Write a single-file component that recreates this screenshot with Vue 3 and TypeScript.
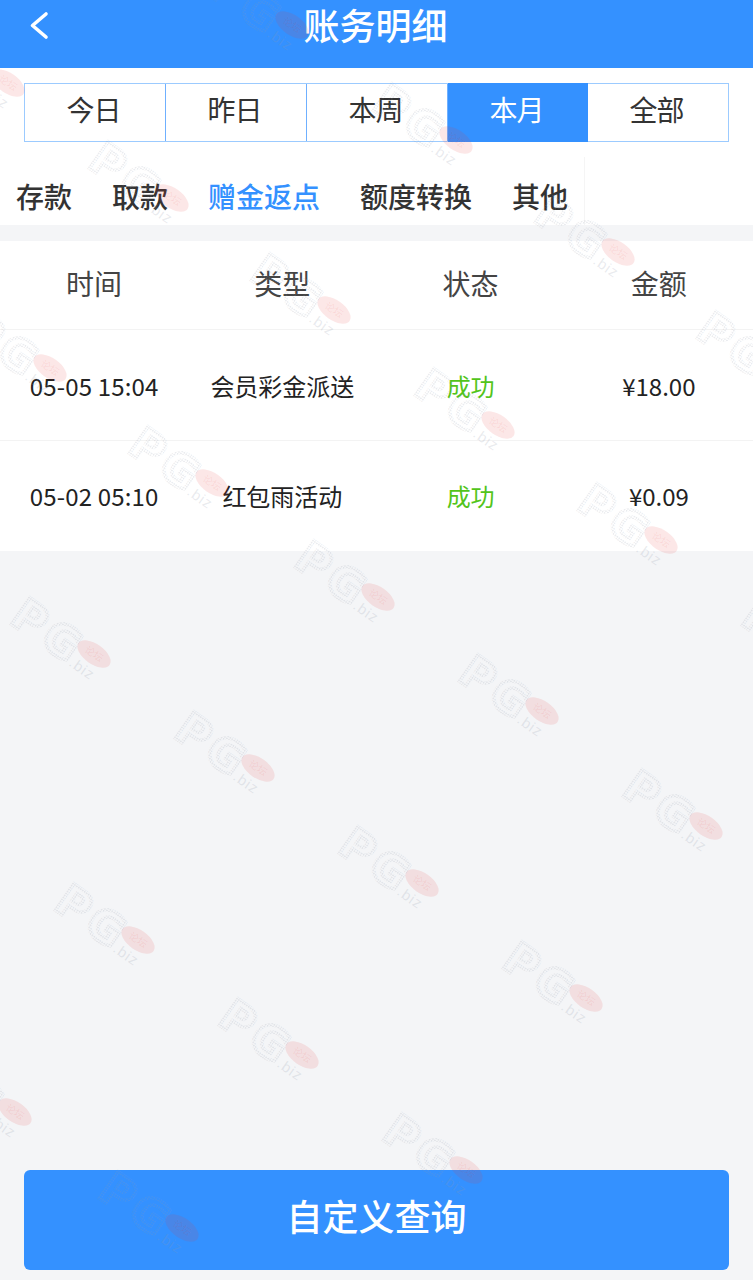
<template>
  <div class="page">
    <header class="nav-bar">
      <button class="back-btn" type="button" aria-label="返回">
        <svg width="20" height="30" viewBox="0 0 20 30">
          <path d="M17 3 L3.5 14.5 L17 26" fill="none" stroke="#fff" stroke-width="3.6" stroke-linecap="round" stroke-linejoin="round" />
        </svg>
      </button>
      <h1 class="nav-title">账务明细</h1>
    </header>

    <section class="filters">
      <div class="range-tabs">
        <div
          v-for="r in ranges"
          :key="r"
          class="range-tab"
          :class="{ active: r === activeRange }"
        >{{ r }}</div>
      </div>
      <div class="type-tabs">
        <div class="type-scroll">
          <span
            v-for="t in types"
            :key="t"
            class="type-tab"
            :class="{ active: t === activeType }"
          >{{ t }}</span>
        </div>
      </div>
    </section>

    <section class="records">
      <div class="row head">
        <span v-for="c in columns" :key="c">{{ c }}</span>
      </div>
      <div v-for="rec in records" :key="rec.time" class="row item">
        <span class="num">{{ rec.time }}</span>
        <span>{{ rec.type }}</span>
        <span class="ok">{{ rec.status }}</span>
        <span>{{ rec.amount }}</span>
      </div>
    </section>

    <div class="footer">
      <button class="query-btn" type="button">自定义查询</button>
    </div>

    <!-- site stamp repeated over the whole page -->
    <svg class="stamps" width="753" height="1280" viewBox="0 0 753 1280" aria-hidden="true">
      <defs>
        <pattern id="dots" width="2.4" height="2.4" patternUnits="userSpaceOnUse">
          <rect width="1.5" height="1.5" fill="#8f98a8" />
        </pattern>
      </defs>
      <g v-for="(s, i) in stamps" :key="i" :transform="`translate(${s[0]} ${s[1]}) rotate(35)`">
        <text class="stamp-pg" x="-89" y="23">P</text>
        <text class="stamp-pg" x="-52" y="23">G</text>
        <text class="stamp-biz" x="-15" y="24">.biz</text>
        <ellipse rx="19" ry="10" fill="#e8383d" fill-opacity="0.12" />
        <text class="stamp-tag" x="0" y="3.5">论坛</text>
      </g>
    </svg>
  </div>
</template>

<script setup lang="ts">
const ranges = ['今日', '昨日', '本周', '本月', '全部']
const activeRange = '本月'

const types = ['存款', '取款', '赠金返点', '额度转换', '其他']
const activeType = '赠金返点'

const columns = ['时间', '类型', '状态', '金额']

const records = [
  { time: '05-05 15:04', type: '会员彩金派送', status: '成功', amount: '¥18.00' },
  { time: '05-02 05:10', type: '红包雨活动', status: '成功', amount: '¥0.09' },
]

// centre of each stamp's tag, on a slanted lattice
const stamps: [number, number][] = [
  [292, 25], [8, 83], [456, 140], [172, 198], [618, 252], [334, 310], [50, 368],
  [780, 368], [498, 425], [212, 483], [661, 540], [378, 597], [94, 654], [825, 655],
  [542, 711], [258, 768], [706, 826], [422, 883], [138, 940], [586, 998], [302, 1055],
  [15, 1112], [466, 1170], [182, 1228],
]
</script>

<style>
html,
body {
  margin: 0;
  background: #f4f5f7;
}
</style>

<style scoped>
.page {
  position: relative;
  display: flex;
  flex-direction: column;
  width: 753px;
  height: 1280px;
  overflow: hidden;
  background: #f4f5f7;
  font-family: "Noto Sans CJK SC", "Noto Sans", sans-serif;
  color: #333;
}

.nav-bar {
  display: flex;
  align-items: flex-start;
  justify-content: center;
  position: relative;
  height: 68px;
  background: #3491ff;
}

.nav-title {
  margin: 0;
  font-size: 36px;
  line-height: 48px;
  font-weight: 500;
  color: #fff;
  transform: translateX(-1px);
}

.back-btn {
  position: absolute;
  left: 29px;
  top: 11px;
  padding: 0;
  border: 0;
  background: none;
  line-height: 0;
}

.filters {
  background: #fff;
  padding-top: 15px;
  height: 142px;
}

.range-tabs {
  display: flex;
  box-sizing: border-box;
  margin: 0 24px;
  height: 59px;
  border: 1px solid #9ccbff;
}

.range-tab {
  flex: 1;
  display: flex;
  align-items: center;
  justify-content: center;
  padding: 0 3px 7px 0;
  font-size: 28px;
  letter-spacing: -1px;
  border-right: 1px solid #6fb0ff;
}

.range-tab:last-child {
  border-right: 0;
}

.range-tab.active {
  margin: -1px 0;
  background: #3491ff;
  color: #fff;
  border-right: 0;
}

.type-tabs {
  margin-top: 15px;
  height: 68px;
}

.type-scroll {
  display: inline-flex;
  height: 68px;
  align-items: center;
  gap: 40px;
  padding: 0 16px;
  border-right: 1px solid #f5f5f5;
}

.type-tab {
  font-size: 28px;
  font-weight: 500;
  line-height: 40px;
  padding-top: 10px;
}

.type-tab.active {
  color: #3491ff;
}

.records {
  margin-top: 16px;
  background: #fff;
}

.row {
  display: grid;
  box-sizing: border-box;
  grid-template-columns: repeat(4, 1fr);
  text-align: center;
  align-items: center;
}

.row.head {
  height: 89px;
  padding-bottom: 4px;
  font-size: 28px;
  color: #444;
  border-bottom: 1px solid #f3f3f3;
}

.row.item {
  height: 110px;
  font-size: 24px;
  color: #222;
}

.row.item + .row.item {
  height: 111px;
  padding-bottom: 2px;
  border-top: 1px solid #f3f3f3;
}

.num {
  letter-spacing: 0.15px;
}

.ok {
  color: #52c41a;
}

.footer {
  margin-top: auto;
  padding: 0 24px 10px;
}

.query-btn {
  display: block;
  width: 100%;
  height: 100px;
  padding: 0 0 11px;
  border: 0;
  border-radius: 6px;
  background: #3491ff;
  color: #fff;
  font-family: inherit;
  font-size: 36px;
  font-weight: 500;
}

.stamps {
  position: absolute;
  left: 0;
  top: 0;
  pointer-events: none;
}

.stamp-pg {
  font-family: "DejaVu Sans", sans-serif;
  font-size: 44px;
  font-weight: 700;
  fill: none;
  stroke: url(#dots);
  stroke-width: 3.5;
  stroke-opacity: 0.2;
}

.stamp-biz {
  font-family: "Liberation Sans", sans-serif;
  font-size: 15px;
  letter-spacing: 1px;
  fill: #8f98a8;
  fill-opacity: 0.2;
}

.stamp-tag {
  font-size: 10px;
  text-anchor: middle;
  fill: #e8383d;
  fill-opacity: 0.1;
}
</style>
